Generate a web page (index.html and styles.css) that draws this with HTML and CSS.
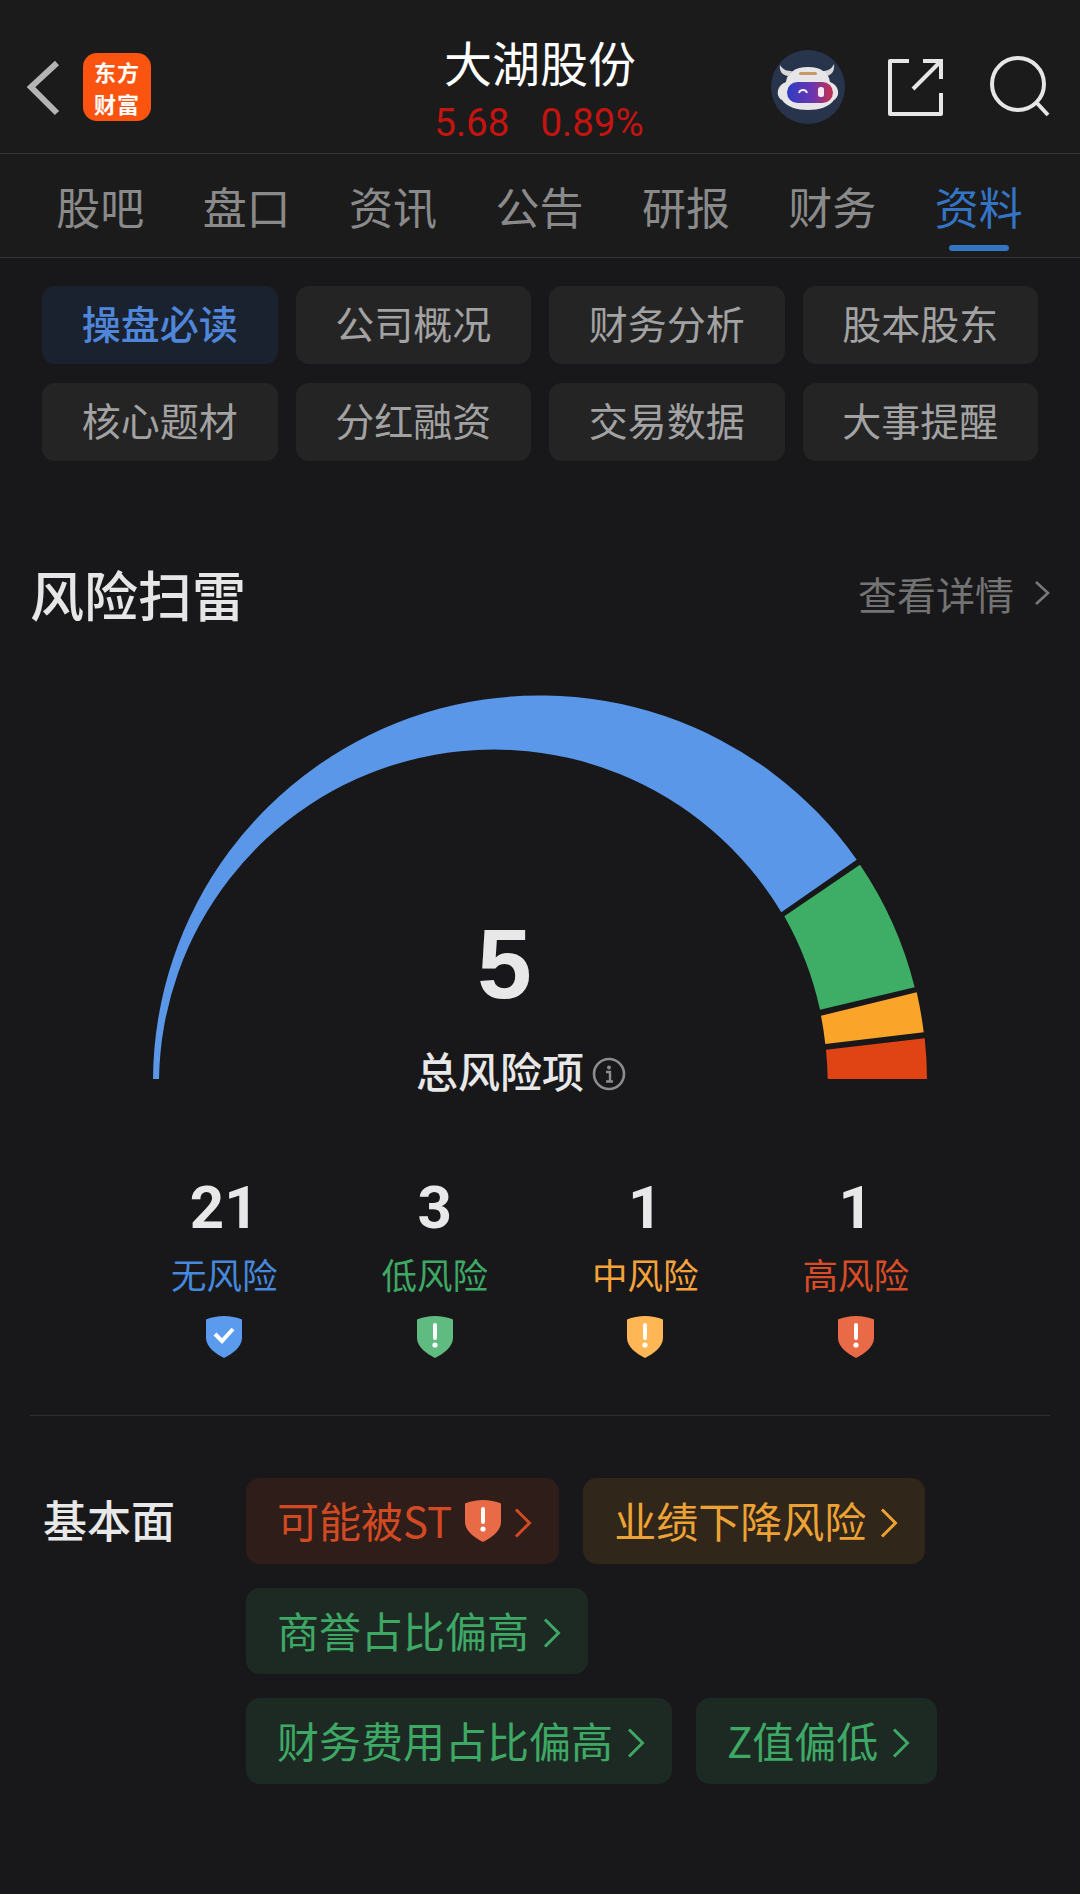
FILE: index.html
```html
<!DOCTYPE html>
<html lang="zh-CN">
<head>
    <meta charset="UTF-8">
    <meta name="viewport" content="width=device-width, initial-scale=1.0">
    <title>大湖股份</title>
    <link rel="stylesheet" href="styles.css">
</head>
<body>
    <svg class="sprites" width="0" height="0" aria-hidden="true">
        <symbol id="shield" viewBox="0 0 36 42">
            <path fill="currentColor" d="M18 0C24 0 31 1.2 36 3.5V22C36 31 26 38 18 42C10 38 0 31 0 22V3.5C5 1.2 12 0 18 0Z"/>
        </symbol>
        <symbol id="chev" viewBox="0 0 18 30">
            <path d="M2 1.5L15.5 15L2 28.5" fill="none" stroke="currentColor" stroke-width="3"/>
        </symbol>
    </svg>

    <!-- Top bar -->
    <header class="topbar">
        <div class="topbar-left">
            <svg class="back" width="36" height="60" viewBox="0 0 36 60"><path d="M32 6L6 30L32 56" fill="none" stroke="#b4b4b4" stroke-width="6"/></svg>
            <div class="logo"><span>东方</span><span>财富</span></div>
        </div>
        <div class="stock">
            <div class="stock-name">大湖股份</div>
            <div class="stock-price"><span>5.68</span><span>0.89%</span></div>
        </div>
        <div class="topbar-right">
            <svg class="avatar" width="74" height="74" viewBox="0 0 74 74">
                <defs>
                    <linearGradient id="visor" x1="0" x2="1" y1="0" y2="0">
                        <stop offset="0" stop-color="#2f3cc4"/>
                        <stop offset="0.55" stop-color="#6a35b0"/>
                        <stop offset="1" stop-color="#c8304c"/>
                    </linearGradient>
                </defs>
                <circle cx="37" cy="37" r="37" fill="#27344c"/>
                <path d="M9 15C8 21 11 25 17 26L21 21C16 21 12 20 9 15ZM63 14C64 20 61 25 56 26L51 21C56 21 60 20 63 14Z" fill="#d8d8d8"/>
                <path d="M37 17C50 17 58 23 59 32C68 35 70 46 63 50C58 57 48 60 37 60C26 60 16 57 11 50C4 46 6 35 15 32C16 23 24 17 37 17Z" fill="#e6e6e8"/>
                <rect x="28" y="22" width="18" height="3" rx="1.5" fill="#c89868"/>
                <rect x="16" y="32" width="46" height="21" rx="10.5" fill="url(#visor)"/>
                <path d="M28 43C29 39 35 39 36 43" fill="none" stroke="#f0f0f8" stroke-width="1.8"/>
                <rect x="47" y="37" width="6" height="10" rx="2.5" fill="#f4e8f0"/>
            </svg>
            <svg class="share" width="56" height="58" viewBox="0 0 56 58">
                <path d="M22 3H3V56H54V35" fill="none" stroke="#e6e6e6" stroke-width="4" stroke-linejoin="round"/>
                <path d="M26 31L54 3M36 3H54V21" fill="none" stroke="#e6e6e6" stroke-width="4"/>
            </svg>
            <svg class="search" width="60" height="62" viewBox="0 0 60 62">
                <circle cx="28" cy="28" r="26" fill="none" stroke="#e6e6e6" stroke-width="4"/>
                <path d="M46 46L58 59" stroke="#e6e6e6" stroke-width="4" fill="none"/>
            </svg>
        </div>
    </header>

    <!-- Tabs -->
    <nav class="tabs">
        <a class="tab">股吧</a>
        <a class="tab">盘口</a>
        <a class="tab">资讯</a>
        <a class="tab">公告</a>
        <a class="tab">研报</a>
        <a class="tab">财务</a>
        <a class="tab active">资料</a>
    </nav>

    <main class="content">
        <!-- Sub menu -->
        <div class="submenu">
            <div class="sub-item active">操盘必读</div>
            <div class="sub-item">公司概况</div>
            <div class="sub-item">财务分析</div>
            <div class="sub-item">股本股东</div>
            <div class="sub-item">核心题材</div>
            <div class="sub-item">分红融资</div>
            <div class="sub-item">交易数据</div>
            <div class="sub-item">大事提醒</div>
        </div>

        <section class="risk">
            <div class="section-head">
                <h2>风险扫雷</h2>
                <div class="more">查看详情<svg width="16" height="26" viewBox="0 0 16 26"><path d="M2 2L14 13L2 24" fill="none" stroke="#777" stroke-width="2.6"/></svg></div>
            </div>

            <!-- Gauge -->
            <div class="gauge">
                <svg width="780" height="390" viewBox="150 692 780 390">
                    <path fill="#5a97e8" d="M153 1080A387 386 0 0 1 856.7 860.7L781.3 913.3A335 335 0 0 0 159 1080Z"/>
                    <path fill="#3eae66" d="M860 865.7A386 386 0 0 1 914.7 988.3L820 1010.7A335 335 0 0 0 784.3 917.3Z"/>
                    <path fill="#faa42a" d="M916.7 993.3A386 386 0 0 1 923.7 1033.3L825.3 1045A335 335 0 0 0 821 1016.7Z"/>
                    <path fill="#e04414" d="M924.7 1039.3A386 386 0 0 1 927 1080L827.7 1080A335 335 0 0 0 826 1050.7Z"/>
                </svg>
                <div class="gauge-center">
                    <div class="total">5</div>
                    <div class="total-label">总风险项
                        <svg class="info" width="34" height="34" viewBox="0 0 34 34">
                            <circle cx="17" cy="17" r="15" fill="none" stroke="#8c8c8c" stroke-width="2.6"/>
                            <circle cx="17" cy="10.5" r="2" fill="#8c8c8c"/>
                            <path d="M14 15H18V24M14 24.5H21" fill="none" stroke="#8c8c8c" stroke-width="2.4"/>
                        </svg>
                    </div>
                </div>
            </div>

            <!-- Counts -->
            <div class="counts">
                <div class="count blue">
                    <div class="num">21</div>
                    <div class="name">无风险</div>
                    <div class="badge">
                        <svg width="36" height="42"><use href="#shield"/></svg>
                        <svg class="mark" width="36" height="42" viewBox="0 0 36 42"><path d="M9 18L16 25L27 13" fill="none" stroke="#fff" stroke-width="4"/></svg>
                    </div>
                </div>
                <div class="count green">
                    <div class="num">3</div>
                    <div class="name">低风险</div>
                    <div class="badge">
                        <svg width="36" height="42"><use href="#shield"/></svg>
                        <svg class="mark" width="36" height="42" viewBox="0 0 36 42"><path d="M18 9V22" stroke="#fff" stroke-width="4" stroke-linecap="round"/><circle cx="18" cy="29" r="2.6" fill="#fff"/></svg>
                    </div>
                </div>
                <div class="count orange">
                    <div class="num">1</div>
                    <div class="name">中风险</div>
                    <div class="badge">
                        <svg width="36" height="42"><use href="#shield"/></svg>
                        <svg class="mark" width="36" height="42" viewBox="0 0 36 42"><path d="M18 9V22" stroke="#fff" stroke-width="4" stroke-linecap="round"/><circle cx="18" cy="29" r="2.6" fill="#fff"/></svg>
                    </div>
                </div>
                <div class="count red">
                    <div class="num">1</div>
                    <div class="name">高风险</div>
                    <div class="badge">
                        <svg width="36" height="42"><use href="#shield"/></svg>
                        <svg class="mark" width="36" height="42" viewBox="0 0 36 42"><path d="M18 9V22" stroke="#fff" stroke-width="4" stroke-linecap="round"/><circle cx="18" cy="29" r="2.6" fill="#fff"/></svg>
                    </div>
                </div>
            </div>

            <div class="divider"></div>

            <!-- Risk items -->
            <div class="fundamentals">
                <div class="fund-title">基本面</div>
                <div class="chips">
                    <div class="chip chip-red">可能被ST
                        <span class="badge chip-badge">
                            <svg width="36" height="42"><use href="#shield"/></svg>
                            <svg class="mark" width="36" height="42" viewBox="0 0 36 42"><path d="M18 9V22" stroke="#fff" stroke-width="4" stroke-linecap="round"/><circle cx="18" cy="29" r="2.6" fill="#fff"/></svg>
                        </span>
                        <svg class="chev" width="18" height="30"><use href="#chev"/></svg>
                    </div>
                    <div class="chip chip-orange">业绩下降风险<svg class="chev" width="18" height="30"><use href="#chev"/></svg></div>
                    <div class="chip chip-green">商誉占比偏高<svg class="chev" width="18" height="30"><use href="#chev"/></svg></div>
                    <div class="chip chip-green">财务费用占比偏高<svg class="chev" width="18" height="30"><use href="#chev"/></svg></div>
                    <div class="chip chip-green">Z值偏低<svg class="chev" width="18" height="30"><use href="#chev"/></svg></div>
                </div>
            </div>
        </section>
    </main>
</body>
</html>
```

FILE: styles.css
```css
/* Page */
html, body {
    margin: 0;
    padding: 0;
    width: 1080px;
    height: 1894px;
    overflow: hidden;
    background: #18181a;
    color: #e8e8e8;
    font-family: "Noto Sans CJK SC", "Noto Sans", sans-serif;
}

.sprites {
    position: absolute;
}

/* Top bar */
.topbar {
    height: 154px;
    box-sizing: border-box;
    padding-top: 20px;
    background: #1b1b1c;
    border-bottom: 1px solid #333;
    display: flex;
    align-items: center;
    justify-content: space-between;
    position: relative;
}

.topbar-left {
    display: flex;
    align-items: center;
    padding-left: 25px;
}

.back {
    margin-right: 22px;
}

.logo {
    width: 68px;
    height: 68px;
    border-radius: 14px;
    background: #fb5410;
    color: #fff;
    font-size: 22px;
    font-weight: 700;
    line-height: 32px;
    letter-spacing: 1px;
    display: flex;
    flex-direction: column;
    align-items: center;
    justify-content: center;
}

.stock {
    position: absolute;
    left: 0;
    right: 0;
    top: 26px;
    text-align: center;
    pointer-events: none;
}

.stock-name {
    font-size: 48px;
    line-height: 71px;
    color: #fff;
}

.stock-price {
    margin: 3px 0 0 -2px;
    display: flex;
    justify-content: center;
    gap: 31px;
    font-family: Roboto, sans-serif;
    font-size: 38.5px;
    line-height: 46px;
    color: #c41410;
}

.topbar-right {
    display: flex;
    align-items: center;
    padding-right: 30px;
}

.avatar {
    margin-right: 42px;
    filter: blur(0.6px);
}

.share {
    margin-right: 47px;
}

/* Tabs */
.tabs {
    height: 104px;
    box-sizing: border-box;
    background: #1b1b1c;
    border-bottom: 1px solid #333;
    padding: 0 28px 0 27px;
    display: grid;
    grid-template-columns: repeat(7, 1fr);
}

.tab {
    font-size: 44px;
    line-height: 104px;
    text-align: center;
    color: #8a8a8a;
    position: relative;
}

.tab.active {
    color: #3474c4;
}

.tab.active::after {
    content: "";
    position: absolute;
    left: 43px;
    bottom: 7px;
    width: 60px;
    height: 6px;
    border-radius: 3px;
    background: #3474c4;
}

/* Sub menu */
.content {
    padding: 28px 30px 0;
}

.submenu {
    margin: 0 12px;
    display: grid;
    grid-template-columns: repeat(4, 1fr);
    gap: 19px 18px;
}

.sub-item {
    height: 78px;
    border-radius: 13px;
    background: #242425;
    color: #a2a2a2;
    font-size: 39px;
    line-height: 72px;
    text-align: center;
}

.sub-item.active {
    background: #1a2230;
    color: #4f86da;
    font-weight: 500;
}

/* Risk section */
.section-head {
    margin-top: 98px;
    display: flex;
    align-items: center;
    justify-content: space-between;
}

.section-head h2 {
    margin: 0;
    font-size: 54px;
    line-height: 70px;
    font-weight: 500;
    color: #e6e6e6;
}

.more {
    font-size: 39px;
    color: #737373;
    display: flex;
    align-items: center;
    gap: 20px;
    margin-bottom: 2px;
}

/* Gauge */
.gauge {
    margin-top: 62px;
    position: relative;
    height: 390px;
}

.gauge > svg {
    display: block;
    margin-left: 120px;
}

.gauge-center {
    position: absolute;
    left: 0;
    right: 0;
    top: 218px;
    text-align: center;
}

.total {
    font-family: "Liberation Sans", sans-serif;
    font-size: 98px;
    font-weight: 700;
    line-height: 110px;
    color: #e8e8e8;
    margin-left: -71px;
}

.total-label {
    font-size: 42px;
    font-weight: 500;
    line-height: 56px;
    color: #e8e8e8;
    margin-top: 23px;
    margin-left: -38px;
    display: flex;
    justify-content: center;
    align-items: center;
    gap: 8px;
}

.info {
    margin-top: 8px;
}

/* Counts */
.counts {
    margin: 92px 0 0 89px;
    display: grid;
    grid-template-columns: repeat(4, 210.5px);
}

.count {
    text-align: center;
}

.num {
    font-family: Roboto, sans-serif;
    font-weight: 700;
    font-size: 60px;
    line-height: 70px;
    color: #e8e8e8;
}

.name {
    font-size: 35.5px;
    line-height: 54px;
    margin-top: 4px;
}

.badge {
    display: inline-block;
    position: relative;
    width: 36px;
    height: 42px;
    margin-top: 15px;
}

.badge svg {
    display: block;
}

.mark {
    position: absolute;
    left: 0;
    top: 0;
}

.count.blue .name { color: #4688dc; }
.count.blue .badge { color: #5b9bed; }
.count.green .name { color: #3ea865; }
.count.green .badge { color: #5fbb80; }
.count.orange .name { color: #f5a33a; }
.count.orange .badge { color: #ffb655; }
.count.red .name { color: #d94c26; }
.count.red .badge { color: #e86a47; }

.divider {
    height: 1px;
    background: #2e2e2e;
    margin-top: 52px;
}

/* Fundamentals */
.fundamentals {
    margin-top: 62px;
    display: flex;
}

.fund-title {
    width: 216px;
    padding-left: 13px;
    box-sizing: border-box;
    font-size: 44px;
    font-weight: 500;
    line-height: 82px;
    color: #e8e8e8;
}

.chips {
    max-width: 700px;
    display: flex;
    flex-wrap: wrap;
    gap: 24px;
}

.chip {
    height: 86px;
    box-sizing: border-box;
    padding: 0 27px 4px 31px;
    border-radius: 14px;
    display: flex;
    align-items: center;
    font-size: 42px;
    white-space: nowrap;
}

.chip .chev {
    margin-left: 14px;
    margin-top: 8px;
}

.chip-badge {
    margin: 4px 0 0 13px;
}

.chip-badge + .chev {
    margin-left: 13px;
}

.chip-red {
    background: #2e1d18;
    color: #d14a24;
}

.chip-red .chip-badge {
    color: #e86a47;
}

.chip-orange {
    background: #302619;
    color: #eda235;
}

.chip-green {
    background: #1d2a23;
    color: #3ea865;
}
```
